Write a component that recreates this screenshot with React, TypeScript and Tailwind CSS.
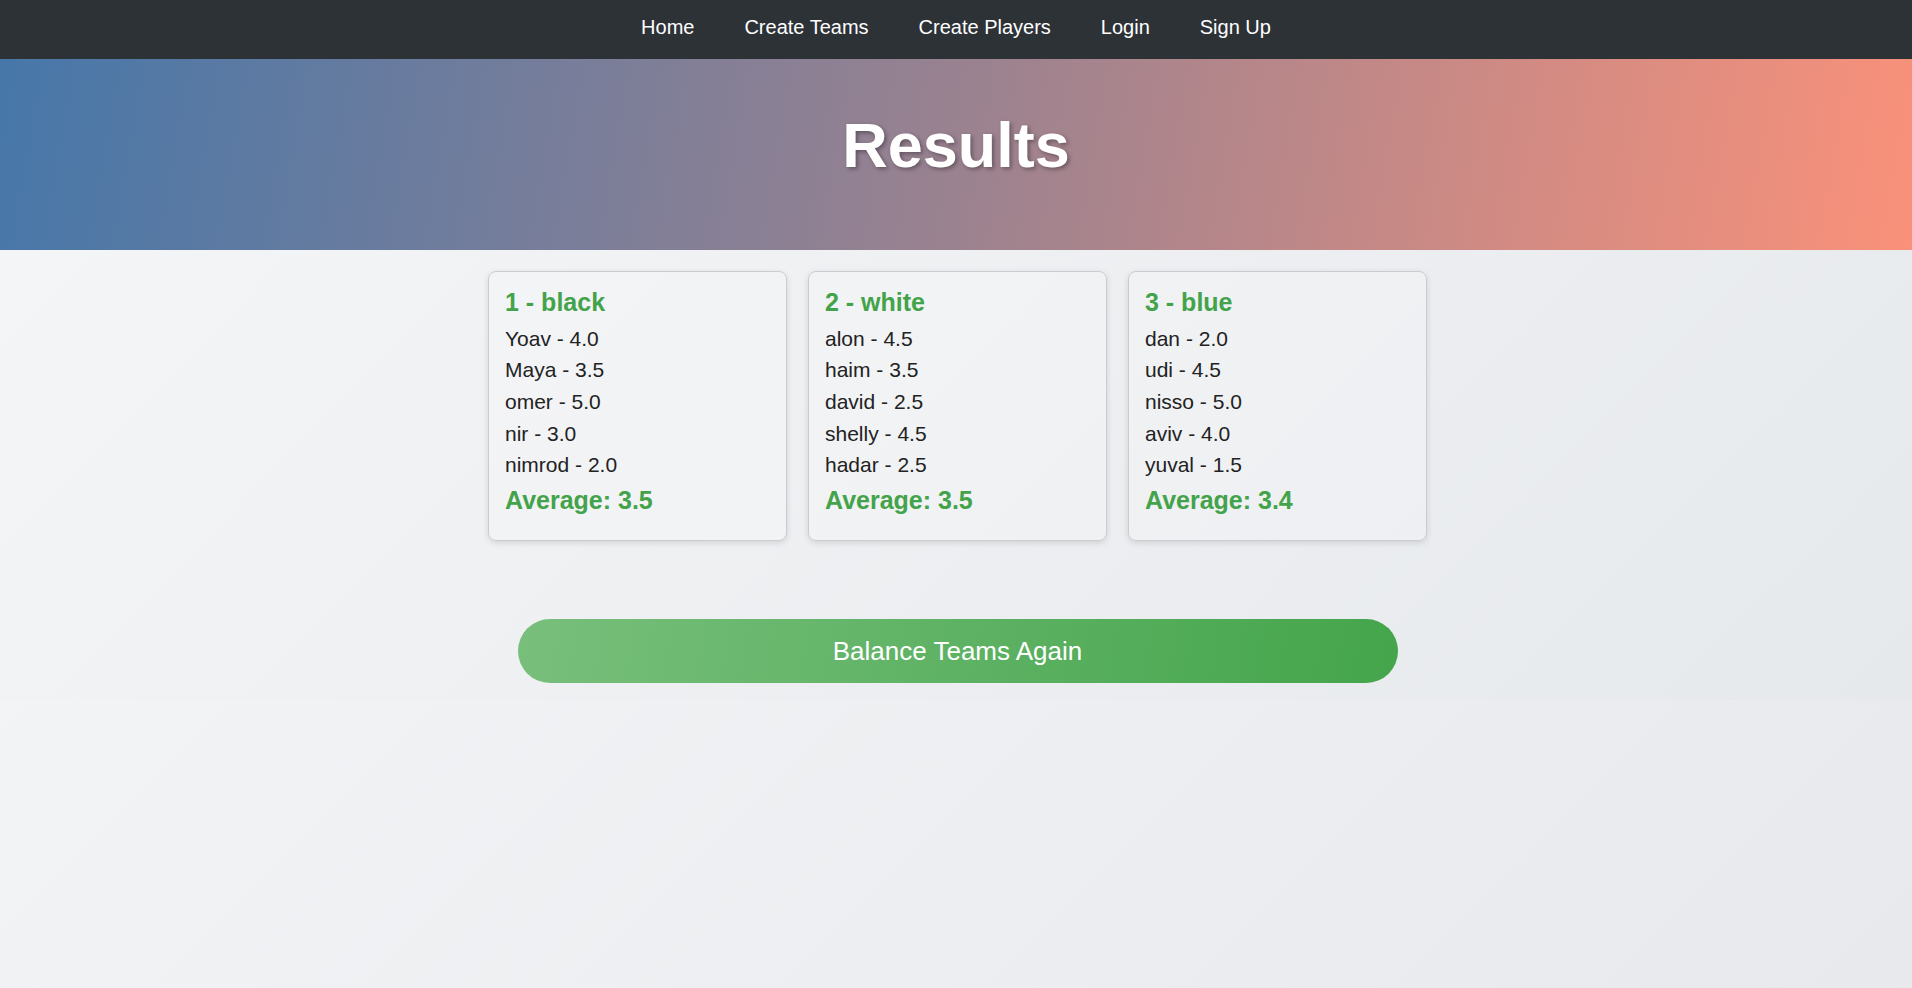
import React from 'react';

type Team = { name: string; players: [string, string][]; average: string };

const teams: Team[] = [
  {
    name: '1 - black',
    players: [['Yoav', '4.0'], ['Maya', '3.5'], ['omer', '5.0'], ['nir', '3.0'], ['nimrod', '2.0']],
    average: '3.5',
  },
  {
    name: '2 - white',
    players: [['alon', '4.5'], ['haim', '3.5'], ['david', '2.5'], ['shelly', '4.5'], ['hadar', '2.5']],
    average: '3.5',
  },
  {
    name: '3 - blue',
    players: [['dan', '2.0'], ['udi', '4.5'], ['nisso', '5.0'], ['aviv', '4.0'], ['yuval', '1.5']],
    average: '3.4',
  },
];

const navLinks = ['Home', 'Create Teams', 'Create Players', 'Login', 'Sign Up'];

function TeamCard({ team }: { team: Team }) {
  return (
    <div className="w-[299px] rounded-lg border border-[#cbcccf] bg-white/20 px-4 pt-4 pb-[26px] shadow-[0_2px_6px_rgba(0,0,0,0.12)]">
      <h3 className="mb-[6px] text-[25px] font-bold leading-[28.75px] text-[#43a34a]">{team.name}</h3>
      <ul>
        {team.players.map(([name, rating]) => (
          <li key={name} className="text-[21px] leading-[31.67px] text-[#222]">
            {name} - {rating}
          </li>
        ))}
      </ul>
      <h4 className="mt-[5px] text-[25px] font-bold leading-[28px] text-[#43a34a]">
        Average: {team.average}
      </h4>
    </div>
  );
}

export default function App() {
  return (
    <div className="min-h-[988px] bg-[linear-gradient(135deg,#f6f7f9,#e7e9ec)] font-['Liberation_Sans',Arial,sans-serif]">
      {/* top nav */}
      <nav className="flex h-[59px] justify-center gap-[50px] bg-[#2d3237] pt-[15px]">
        {navLinks.map((l) => (
          <a key={l} href="#" className="text-[20px] leading-[24px] text-white">
            {l}
          </a>
        ))}
      </nav>

      {/* banner */}
      <header className="h-[191px] bg-[linear-gradient(100deg,#4677a9,#9a8290_50%,#fa917a)] pt-[49px] text-center">
        <h1 className="text-[63px] font-bold leading-[74px] text-white [text-shadow:2px_2px_4px_rgba(0,0,0,0.35)]">
          Results
        </h1>
      </header>

      {/* results */}
      <section className="flex h-[450px] flex-col items-center bg-[linear-gradient(135deg,#f4f5f7,#e6e9ec)] pt-[21px]">
        <div className="flex gap-[21px] pl-[3px]">
          {teams.map((t) => (
            <TeamCard key={t.name} team={t} />
          ))}
        </div>
        <button className="mt-[78px] ml-[3px] h-[64px] w-[880px] rounded-full bg-[linear-gradient(100deg,#78bf7c,#44a54b)] text-[26px] text-white">
          Balance Teams Again
        </button>
      </section>
    </div>
  );
}
